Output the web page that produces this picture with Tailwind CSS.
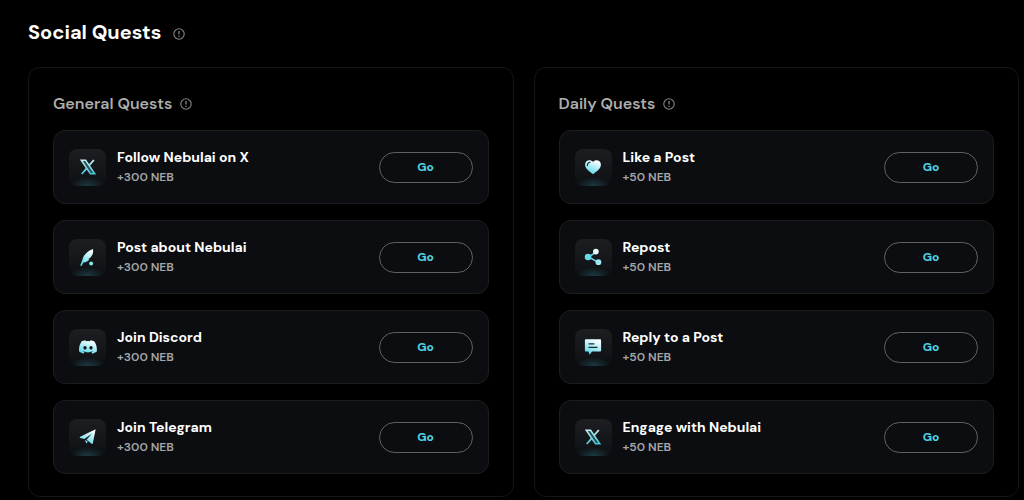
<!DOCTYPE html>
<html lang="en">
<head>
    <meta charset="UTF-8">
    <meta name="viewport" content="width=device-width, initial-scale=1.0">
    <title>Social Quests</title>
    <script src="https://cdn.jsdelivr.net/npm/@tailwindcss/browser@4"></script>
</head>
<body class="bg-black text-white font-['DM_Sans',Inter,sans-serif]">

    <!-- Shared icons -->
    <svg class="absolute w-0 h-0" aria-hidden="true">
        <defs>
            <linearGradient id="ice" x1="0.7" y1="0" x2="0.3" y2="1">
                <stop offset="0.1" stop-color="#f2fdff"/>
                <stop offset="1" stop-color="#55d5e6"/>
            </linearGradient>
            <linearGradient id="iceX" gradientUnits="userSpaceOnUse" x1="0" y1="2" x2="0" y2="18">
                <stop offset="0" stop-color="#c9eef3"/>
                <stop offset="1" stop-color="#45c3d6"/>
            </linearGradient>
        </defs>
        <symbol id="info" viewBox="0 0 12 12">
            <circle cx="6" cy="6" r="5.2" fill="none" stroke="currentColor" stroke-width="1.1"/>
            <path d="M6 3v3.6M6 7.7v1.2" fill="none" stroke="currentColor" stroke-width="1.3"/>
        </symbol>
        <symbol id="x" viewBox="0 0 20 20">
            <path d="M2.500 2.500h4.800L17.500 17.500h-4.800z" fill="#28535c" stroke="url(#iceX)" stroke-width="1.700"/>
            <path d="M16.500 2.200 11 8.500M8.800 11.200 3 17.800" fill="none" stroke="url(#iceX)" stroke-width="2"/>
        </symbol>
        <symbol id="quill" viewBox="0 0 20 20">
            <path d="M15.500 1C10 3 5.500 7 4.300 11.500c-.7 2.500-1.700 5-3 8l1.600.5 2-4c2.900 0 5.400-1.300 6.700-3.500l-1.300-.2 2.500-1.700C15 8 16.200 5 15.500 1z" fill="url(#ice)"/>
            <circle cx="13.500" cy="17.300" r="2.200" fill="#8be5ef"/>
        </symbol>
        <symbol id="discord" viewBox="0 0 24 24">
            <path d="M20.300 4.400a19.800 19.800 0 0 0-4.900-1.500l-.7 1.300a18.300 18.300 0 0 0-5.500 0l-.7-1.300a19.700 19.700 0 0 0-4.900 1.500C.5 9 -.3 13.600.1 18.100a19.900 19.900 0 0 0 6 3l1.300-2.100-1.900-.9.400-.3a14.200 14.200 0 0 0 12.100 0l.4.300-1.900.9 1.300 2.100a19.800 19.800 0 0 0 6-3c.5-5.200-.8-9.700-3.500-13.700zM8 15.300c-1.200 0-2.200-1.100-2.200-2.400s1-2.400 2.200-2.400 2.200 1.100 2.200 2.400-1 2.400-2.200 2.400zm8 0c-1.200 0-2.200-1.100-2.200-2.400s1-2.400 2.200-2.400 2.200 1.100 2.200 2.400-1 2.400-2.200 2.400z" fill="url(#ice)"/>
        </symbol>
        <symbol id="telegram" viewBox="0 0 20 20">
            <path d="M18.500 1.500 1.300 9.800c-.7.300-.6 1 0 1.200l4.700 1.300L14.500 6 8.400 13l5.600 4.500c.6.400 1.200.2 1.400-.6z" fill="url(#ice)"/>
            <path d="M6.700 13l1.200 4.200 2-2z" fill="#7fe0ec"/>
        </symbol>
        <symbol id="heart" viewBox="0 0 20 20">
            <path d="M10 18C5 14.500 1.200 11.500 1.200 7.300 1.200 2.500 7.300 1 10 4.300 12.700 1 18.800 2.500 18.800 7.300 18.800 11.500 15 14.500 10 18z" fill="url(#ice)"/>
            <path d="M3.800 8.300C3.700 6.200 4.800 4.900 6.800 4.700" fill="none" stroke="#15343a" stroke-width="1.300" stroke-linecap="round"/>
        </symbol>
        <symbol id="share" viewBox="0 0 20 20">
            <path d="M13.500 4.500 5 10l10 5.500" fill="none" stroke="#6fdbe8" stroke-width="1.700"/>
            <circle cx="13.200" cy="4" r="3.200" fill="#e6f9fb"/>
            <circle cx="4.500" cy="10" r="3.700" fill="#65dcea"/>
            <circle cx="16" cy="15.800" r="3.200" fill="#9ee9f1"/>
        </symbol>
        <symbol id="message" viewBox="0 0 20 20">
            <path d="M2.300 1.500h15.400c.8 0 1.300.6 1.300 1.300v11c0 .8-.5 1.300-1.300 1.300H9l-2.800 3.600L5 15.100H2.300c-.8 0-1.300-.5-1.300-1.300v-11c0-.7.500-1.300 1.300-1.300z" fill="url(#ice)"/>
            <path d="M5 6.500h6.500M5 10.400h10" stroke="#153138" stroke-width="1.600"/>
        </symbol>
    </svg>

    <main class="pl-7 pr-[5px] pt-5 pb-1">
        <h1 class="flex items-center gap-3 text-xl leading-6 font-bold">
            Social Quests
            <svg class="size-3 mt-1 text-[#858585]"><use href="#info"/></svg>
        </h1>

        <div class="mt-[23px] grid grid-cols-2 gap-5">
            <!-- General quests -->
            <section class="border border-[#151617] rounded-xl px-6 pt-6 pb-[22px]">
                <h2 class="flex items-center gap-2 text-base leading-6 font-semibold text-[#adadad]">
                    General Quests
                    <svg class="size-3 text-[#858585]"><use href="#info"/></svg>
                </h2>
                <ul id="general" class="mt-[14px] flex flex-col gap-4"></ul>
            </section>

            <!-- Daily quests -->
            <section class="border border-[#151617] rounded-xl px-6 pt-6 pb-[22px]">
                <h2 class="flex items-center gap-2 text-base leading-6 font-semibold text-[#adadad]">
                    Daily Quests
                    <svg class="size-3 text-[#858585]"><use href="#info"/></svg>
                </h2>
                <ul id="daily" class="mt-[14px] flex flex-col gap-4"></ul>
            </section>
        </div>
    </main>

    <script>
        const general = [
            { title: "Follow Nebulai on X", reward: 300, icon: "x" },
            { title: "Post about Nebulai", reward: 300, icon: "quill" },
            { title: "Join Discord", reward: 300, icon: "discord" },
            { title: "Join Telegram", reward: 300, icon: "telegram" }
        ];
        const daily = [
            { title: "Like a Post", reward: 50, icon: "heart" },
            { title: "Repost", reward: 50, icon: "share" },
            { title: "Reply to a Post", reward: 50, icon: "message" },
            { title: "Engage with Nebulai", reward: 50, icon: "x" }
        ];

        function renderQuests(id, quests) {
            document.getElementById(id).innerHTML = quests.map(quest => `
                <li class="flex items-center h-[74px] px-[15px] bg-[#0b0d10] border border-[#1b1d1f] rounded-xl">
                    <div class="flex items-center justify-center size-[37px] rounded-lg bg-[radial-gradient(17px_9px_at_50%_100%,#1c3a43_0%,transparent_100%),linear-gradient(#1d1e21,#0d1013)]">
                        <svg class="size-[18px]"><use href="#${quest.icon}"/></svg>
                    </div>
                    <div class="ml-[11px] flex-1">
                        <h3 class="text-sm leading-5 font-bold">${quest.title}</h3>
                        <p class="text-xs leading-5 font-semibold text-[#a5a6a7]">+${quest.reward} NEB</p>
                    </div>
                    <button class="w-[94px] h-[31px] rounded-full border border-[#606163] text-xs font-extrabold text-[#4fd3e3]">Go</button>
                </li>
            `).join("");
        }

        renderQuests("general", general);
        renderQuests("daily", daily);
    </script>

</body>
</html>
